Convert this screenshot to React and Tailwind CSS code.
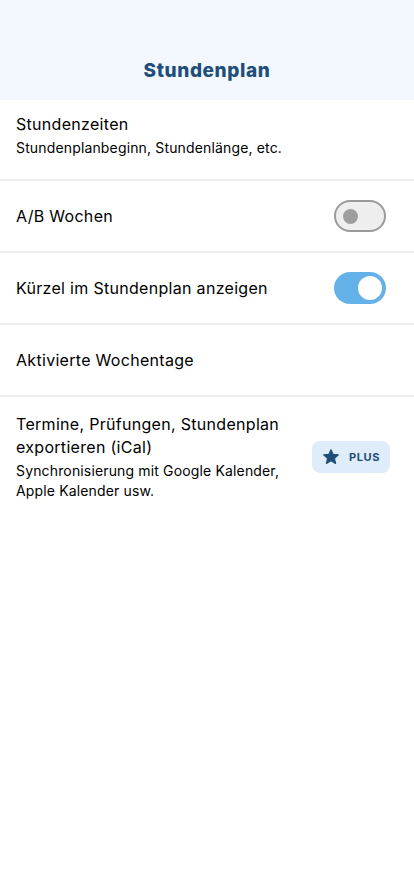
import React from 'react';

const Toggle = ({ on }) =>
  on ? (
    <div className="w-[52px] h-[32px] rounded-full bg-[#64b1ea] flex items-center justify-end px-[4px] shrink-0">
      <div className="w-[24px] h-[24px] rounded-full bg-white" />
    </div>
  ) : (
    <div className="w-[52px] h-[32px] rounded-full bg-[#eeeeee] border-2 border-[#9a9a9a] flex items-center px-[7px] shrink-0">
      <div className="w-[15px] h-[15px] rounded-full bg-[#9e9e9e]" />
    </div>
  );

const Row = ({ children, className = '' }) => (
  <div className={`flex items-center justify-between px-4 border-b-2 border-[#f0f0f0] ${className}`}>{children}</div>
);

export default function App() {
  return (
    <div className="min-h-[896px] bg-white text-black" style={{ fontFamily: 'Inter, "Noto Sans", sans-serif' }}>
      <div className="h-[100px] bg-[#f3f8ff] flex items-end justify-center pb-[15px]">
        <h1 className="text-[19px] font-extrabold text-[#1f4e79] tracking-[0.6px]">Stundenplan</h1>
      </div>

      <Row className="h-[81px] items-start pt-[13px]">
        <div>
          <div className="text-[16px] leading-[22px] tracking-[0.3px]">Stundenzeiten</div>
          <div className="text-[14px] leading-[20px] mt-[3px] tracking-[0.15px]">Stundenplanbeginn, Stundenlänge, etc.</div>
        </div>
      </Row>

      <Row className="h-[72px]">
        <div className="text-[16px] tracking-[0.3px]">A/B Wochen</div>
        <div className="mr-[12px]"><Toggle on={false} /></div>
      </Row>

      <Row className="h-[72px]">
        <div className="text-[16px] tracking-[0.3px]">Kürzel im Stundenplan anzeigen</div>
        <div className="mr-[12px]"><Toggle on={true} /></div>
      </Row>

      <Row className="h-[72px]">
        <div className="text-[16px] tracking-[0.3px]">Aktivierte Wochentage</div>
      </Row>

      <div className="flex items-center justify-between px-4 pt-[16px] pb-[14px]">
        <div className="w-[280px]">
          <div className="text-[16px] leading-[23px] tracking-[0.3px]">Termine, Prüfungen, Stundenplan exportieren (iCal)</div>
          <div className="text-[14px] leading-[20px] mt-[2px] tracking-[0.15px]">Synchronisierung mit Google Kalender, Apple Kalender usw.</div>
        </div>
        <div className="mr-[8px] w-[78px] h-[32px] rounded-lg bg-[#deedf9] flex items-center justify-center gap-[9px]">
          <svg width="18" height="18" viewBox="0 0 24 24" fill="#1f4e79">
            <path d="M12 2.2l2.9 6.3 6.9.7-5.2 4.6 1.5 6.8L12 17.1l-6.1 3.5 1.5-6.8-5.2-4.6 6.9-.7z" strokeLinejoin="round" stroke="#1f4e79" strokeWidth="1.5" />
          </svg>
          <span className="text-[11px] font-bold text-[#1f4e79] tracking-[0.6px]">PLUS</span>
        </div>
      </div>
    </div>
  );
}
